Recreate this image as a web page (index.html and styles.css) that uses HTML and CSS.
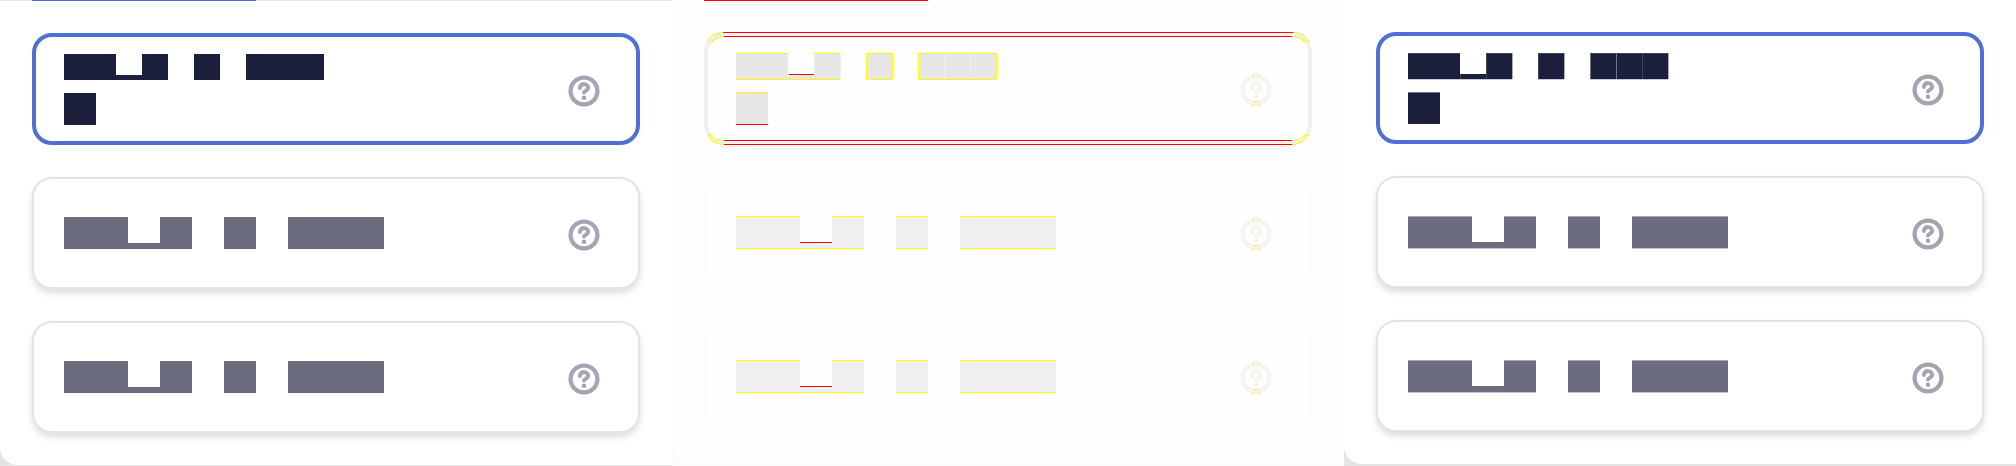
FILE: index.html
```
<!DOCTYPE html>
<html lang="en">
<head>
<meta charset="utf-8">
<title>Options comparison</title>
<link rel="stylesheet" href="styles.css">
</head>
<body>
<svg class="defs" aria-hidden="true">
  <symbol id="help" viewBox="-16 -16 32 32">
    <circle r="13.4" fill="none" stroke="currentColor" stroke-width="4.3"/>
    <path d="M-4.1 -2.9C-3.4 -8.4 4.2 -8 4.2 -2.9C4.2 -.4 .2 -.4 0 1.5" fill="none" stroke="currentColor" stroke-width="4" stroke-linecap="round" stroke-linejoin="round"/>
    <circle cy="6.8" r="2.2" fill="currentColor"/>
  </symbol>
  <symbol id="help-ticks" viewBox="-16 -16 32 32">
    <path d="M-4 -15h2v1h-2zM2 -15h1v1h-1zM-4 -2h1v1h-1zM-3 11h2v1h-2zM1 11h2v1h-2zM-4 15h2v1h-2zM2 15h2v1h-2z" fill="#ff0"/>
  </symbol>
  <symbol id="label-top" viewBox="0 0 272 72">
    <path d="M0 0H52V21H78V0H104V26H0zM130 0h26v26h-26zM182 0h78v26h-78zM0 39h32v32H0z" fill="currentColor"/>
  </symbol>
  <symbol id="label" viewBox="0 0 320 32">
    <path d="M0 0H64V26H96V0H128V32H0zM160 0h32v32h-32zM224 0h96v32h-96z" fill="currentColor"/>
  </symbol>
  <symbol id="label-top-soft" viewBox="0 0 272 72">
    <path d="M0 0H52V21H78V0H104V26H0zM130 0h26v26h-26zM182 0h78v26h-78zM0 39h32v32H0z" fill="#1c1f3b"/>
    <path d="M0 0h52v1H0zM78 0h26v1H78zM130 0h26v1h-26zM182 0h78v1h-78zM52 21h1v5h-1zM78 1h1v25h-1zM130 1h1v25h-1zM234 1h1v25h-1z" fill="#41445b"/>
    <path d="M208 1h1v25h-1zM182 1h1v25h-1zM0 39h32v1H0z" fill="#72748a"/>
    <path d="M0 26h104v1H0zM130 26h26v1h-26zM182 26h78v1h-78z" fill="#c6c7d3"/>
    <path d="M104 0h1v26h-1zM156 0h1v26h-1zM260 0h1v26h-1z" fill="#aaabb9"/>
  </symbol>
  <symbol id="label-soft" viewBox="0 0 320 33">
    <path d="M0 1H64V26H96V1H128V32H0zM160 1h32v31h-32zM224 1h96v31h-96z" fill="#6b6c7e"/>
    <path d="M0 0h64v1H0zM96 0h32v1H96zM160 0h32v1h-32zM224 0h96v1h-96z" fill="#a6a7b2"/>
    <path d="M0 32h128v1H0zM160 32h32v1h-32zM224 32h96v1h-96z" fill="#c0c1cc"/>
  </symbol>
  <symbol id="label-top-diff" viewBox="0 0 272 72">
    <path d="M0 0H52V21H78V0H105V26H0zM130 0h26v26h-26zM182 0h78v26h-78zM0 39h32v33H0z" fill="#e7e7e7"/>
    <path d="M78 1h1v25h-1zM104 0h1v26h-1zM208 1h1v25h-1zM234 1h1v25h-1z" fill="#efefef"/>
    <path d="M0 0h52v1H0zM78 0h26v1H78zM0 26h104v1H0zM130 0h26v1h-26zM130 26h26v1h-26zM130 0h1v27h-1zM156 0h1v26h-1zM182 0h78v1h-78zM182 26h78v1h-78zM182 0h1v27h-1zM260 0h1v26h-1zM0 39h32v1H0zM52 21h1v1h-1z" fill="#ff0"/>
    <path d="M53 21h25v1H53zM0 71h32v1H0z" fill="#f00"/>
  </symbol>
  <symbol id="label-diff" viewBox="0 0 320 33">
    <path d="M0 0H64V26H96V0H128V33H0zM160 0h32v33h-32zM224 0h96v33h-96z" fill="#efefef"/>
    <path d="M0 0h64v1H0zM96 0h32v1H96zM0 32h128v1H0zM160 0h32v1h-32zM160 32h32v1h-32zM224 0h96v1h-96zM224 32h96v1h-96z" fill="#ff0"/>
    <path d="M64 26h32v1H64z" fill="#f00"/>
  </symbol>
</svg>
<main class="comparison">
  <section class="panel expected">
    <div class="tabs"><div class="tab"></div></div>
    <div class="cards">
      <div class="card selected"><svg class="label-top"><use href="#label-top"/></svg><svg class="help"><use href="#help"/></svg></div>
      <div class="card"><svg class="label"><use href="#label"/></svg><svg class="help"><use href="#help"/></svg></div>
      <div class="card"><svg class="label"><use href="#label"/></svg><svg class="help"><use href="#help"/></svg></div>
    </div>
  </section>
  <section class="panel diff">
    <div class="tabs"><div class="tab"></div></div>
    <div class="cards">
      <div class="card selected">
        <svg class="outline" viewBox="0 0 608 113">
          <rect x="2" y="2.5" width="604" height="108" rx="18" fill="none" stroke="#f0f0f0" stroke-width="4"/>
          <path d="M19 .5C12 .5 6 4 2.500 10.500M20 4.500C14 4.500 10 7 7 10.500M589 .5C596 .5 602 4 605.500 10.500M588 4.500C594 4.500 598 7 601 10.500M20 112.500C13 112.500 8 110 3.500 103M20 108.500C14 108.500 8 106 5.500 102M588 112.500C595 112.500 600 110 604.500 103M588 108.500C594 108.500 599 106 602.500 102" fill="none" stroke="#ff0" shape-rendering="crispEdges"/>
          <path d="M19 0h570v1H19zM20 4h568v1H20zM20 108h568v1H20zM20 112h568v1H20z" fill="#f00"/>
        </svg>
        <svg class="label-top"><use href="#label-top-diff"/></svg><svg class="help"><use href="#help"/><use href="#help-ticks"/></svg>
      </div>
      <div class="card"><svg class="label"><use href="#label-diff"/></svg><svg class="help"><use href="#help"/><use href="#help-ticks"/></svg></div>
      <div class="card"><svg class="label"><use href="#label-diff"/></svg><svg class="help"><use href="#help"/><use href="#help-ticks"/></svg></div>
    </div>
  </section>
  <section class="panel actual">
    <div class="cards">
      <div class="card selected"><svg class="label-top"><use href="#label-top-soft"/></svg><svg class="help"><use href="#help"/></svg></div>
      <div class="card"><svg class="label"><use href="#label-soft"/></svg><svg class="help"><use href="#help"/></svg></div>
      <div class="card"><svg class="label"><use href="#label-soft"/></svg><svg class="help"><use href="#help"/></svg></div>
    </div>
  </section>
</main>
</body>
</html>
```
FILE: styles.css
```
* { box-sizing: border-box; }
body { margin: 0; background: #fff; font-family: "Liberation Sans", sans-serif; overflow: hidden; }
.defs { display: none; }
svg { display: block; flex: none; overflow: visible; }
.comparison { display: grid; grid-template-columns: repeat(3, 672px); height: 466px; }
.panel { height: 466px; }
.expected, .actual { background: linear-gradient(#fff 440px, #e4e4e4 440px); }
.tabs { height: 1px; padding: 0 32px; background: #e4e4e4; }
.tab { width: 224px; height: 1px; background: #506fd5; }
.cards { display: flex; flex-direction: column; gap: 32px; height: 464px; padding: 32px; background: #fff; border-bottom-left-radius: 18px; }
.card {
  position: relative;
  display: flex;
  flex: none;
  align-items: center;
  justify-content: space-between;
  height: 112px;
  padding: 0 38px 0 30px;
  border: 2px solid #e4e4e4;
  border-radius: 20px;
  background: #fff;
  box-shadow: 0 4px 6px rgba(0, 0, 0, .14);
}
.selected { align-items: flex-start; padding: 17px 36px 0 28px; border: 4px solid #506fd5; box-shadow: none; }
.label-top { width: 272px; height: 72px; color: #1c1f3b; }
.label { width: 320px; height: 32px; color: #6b6c7e; }
.help { width: 32px; height: 32px; margin-top: 4px; color: #a5a5b2; }
.selected .help { margin-top: 21px; }
.diff { background: linear-gradient(#fefefe 440px, #fbfbfb 440px); }
.diff .tabs { background: #fff; }
.diff .tab { background: #f00; }
.diff .cards { height: 463px; padding-top: 31px; background: #fefefe; }
.diff .card { border-color: #fcfcfc; background: #fefefe; box-shadow: 0 4px 6px rgba(0, 0, 0, .014); }
.diff .selected { border-color: transparent; box-shadow: none; }
.diff .help { color: #f4f4f4; }
.diff .label, .actual .label { height: 33px; margin-top: 1px; }
.outline { position: absolute; left: -4px; top: -4px; width: 608px; height: 113px; }
```
